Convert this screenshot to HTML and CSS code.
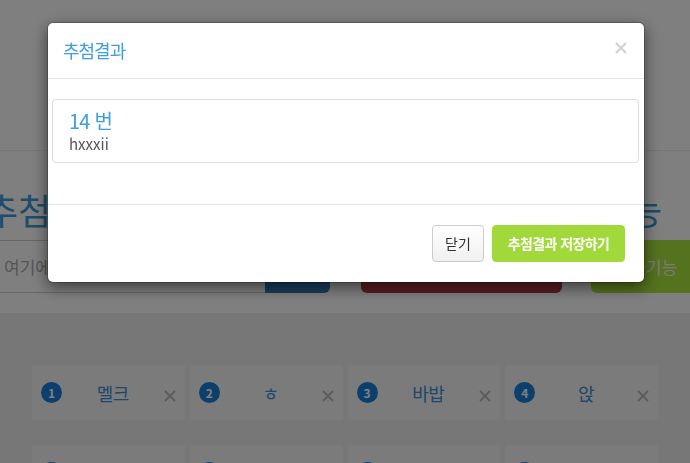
FILE: index.html
```html
<!DOCTYPE html>
<html lang="ko">
<head>
<meta charset="utf-8">
<title>추첨결과</title>
<link rel="stylesheet" href="styles.css">
</head>
<body>
<div class="page">
  <header class="top"></header>
  <section class="controls">
    <div class="title-row">
      <h1 class="title">추첨 프로그램</h1>
      <span class="title-right">추가 기능</span>
    </div>
    <div class="input-row">
      <div class="input-group">
        <input class="name-input" type="text" placeholder="여기에 이름을 입력하세요">
        <button class="btn-add">추가</button>
      </div>
      <button class="btn-red">추첨하기</button>
      <button class="btn-green">추가기능</button>
    </div>
  </section>
  <section class="list">
    <div class="cards">
      <div class="card"><span class="badge">1</span><span class="name">멜크</span><span class="remove"><svg viewBox="0 0 12 12" width="12" height="12"><path d="M1 1L11 11M11 1L1 11"/></svg></span></div>
      <div class="card"><span class="badge">2</span><span class="name">ㅎ</span><span class="remove"><svg viewBox="0 0 12 12" width="12" height="12"><path d="M1 1L11 11M11 1L1 11"/></svg></span></div>
      <div class="card"><span class="badge">3</span><span class="name">바밥</span><span class="remove"><svg viewBox="0 0 12 12" width="12" height="12"><path d="M1 1L11 11M11 1L1 11"/></svg></span></div>
      <div class="card"><span class="badge">4</span><span class="name">앉</span><span class="remove"><svg viewBox="0 0 12 12" width="12" height="12"><path d="M1 1L11 11M11 1L1 11"/></svg></span></div>
      <div class="card"><span class="badge">5</span><span class="name">가나</span><span class="remove"><svg viewBox="0 0 12 12" width="12" height="12"><path d="M1 1L11 11M11 1L1 11"/></svg></span></div>
      <div class="card"><span class="badge">6</span><span class="name">다라</span><span class="remove"><svg viewBox="0 0 12 12" width="12" height="12"><path d="M1 1L11 11M11 1L1 11"/></svg></span></div>
      <div class="card"><span class="badge">7</span><span class="name">마바</span><span class="remove"><svg viewBox="0 0 12 12" width="12" height="12"><path d="M1 1L11 11M11 1L1 11"/></svg></span></div>
      <div class="card"><span class="badge">8</span><span class="name">사아</span><span class="remove"><svg viewBox="0 0 12 12" width="12" height="12"><path d="M1 1L11 11M11 1L1 11"/></svg></span></div>
    </div>
  </section>
</div>

<div class="backdrop"></div>

<div class="modal">
  <div class="modal-header">
    <h4 class="modal-title">추첨결과</h4>
    <button class="close" aria-label="닫기"><svg viewBox="0 0 12 12" width="12" height="12"><path d="M1 1L11 11M11 1L1 11"/></svg></button>
  </div>
  <div class="modal-body">
    <div class="result">
      <h4 class="result-num">14 번</h4>
      <p class="result-name">hxxxii</p>
    </div>
  </div>
  <div class="modal-footer">
    <button class="btn btn-default">닫기</button>
    <button class="btn btn-save">추첨결과 저장하기</button>
  </div>
</div>
</body>
</html>
```
FILE: styles.css
```css
* { box-sizing: border-box; }
html, body { margin: 0; padding: 0; }
body {
  width: 690px;
  height: 463px;
  overflow: hidden;
  background: #fff;
  font-family: "Noto Sans CJK KR", "Noto Sans", sans-serif;
  color: #333;
}
.page { width: 690px; height: 463px; overflow: hidden; }

.top {
  height: 151px;
  border-bottom: 1px solid #eee;
}

.controls {
  margin-left: -15px;
  width: 677px;
  padding-top: 36px;
}
.title-row {
  display: flex;
  justify-content: space-between;
  align-items: center;
  height: 44px;
}
.title, .title-right {
  margin: 0;
  font-size: 36px;
  font-weight: 400;
  line-height: 44px;
  color: #3a9ad9;
  white-space: nowrap;
}
.input-row {
  display: flex;
  margin-top: 9px;
  height: 53px;
  white-space: nowrap;
}
.input-group { display: flex; flex-shrink: 0; }
.name-input {
  width: 280px;
  height: 53px;
  border: 1px solid #ccc;
  border-right: 0;
  padding: 0 0 0 18px;
  font-family: inherit;
  font-size: 17px;
  color: #333;
  background: #fff;
}
.name-input::placeholder { color: #aaa; }
.btn-add, .btn-red, .btn-green {
  flex-shrink: 0;
  border: 0;
  height: 53px;
  font-family: inherit;
  font-size: 17px;
  color: #fff;
}
.btn-add {
  width: 65px;
  background: #337ab7;
  border-radius: 0 6px 6px 0;
}
.btn-red {
  width: 201px;
  margin-left: 31px;
  background: #b43c44;
  border-radius: 6px;
}
.btn-green {
  width: 110px;
  margin-left: 29px;
  background: #aae43e;
  border-radius: 6px;
  color: #f4f4f4;
}

.list {
  margin-top: 20px;
  background: #eee;
  padding-top: 51px;
  height: 160px;
}
.cards {
  width: 628px;
  margin: 0 auto;
  display: grid;
  grid-template-columns: repeat(4, 1fr);
  column-gap: 3px;
  row-gap: 23px;
}
.card {
  height: 57px;
  background: #f7f7f7;
  border: 1px solid #f0f0f0;
  border-radius: 3px;
  display: flex;
  align-items: center;
  padding: 0 9px 0 9px;
}
.badge {
  width: 21px;
  height: 21px;
  border-radius: 50%;
  background: #1a7fd9;
  color: #fff;
  font-size: 12px;
  font-weight: 700;
  line-height: 21px;
  text-align: center;
  flex-shrink: 0;
}
.name {
  flex: 1;
  text-align: center;
  font-size: 18px;
  letter-spacing: -0.5px;
  color: #3d8fd6;
}
.remove {
  width: 12px;
  height: 12px;
  margin-top: 6px;
  display: flex;
}
.remove svg path {
  stroke: #b8b8b8;
  stroke-width: 1.8;
  fill: none;
}

.backdrop {
  position: fixed;
  inset: 0;
  background: rgba(0, 0, 0, 0.5);
}

.modal {
  position: fixed;
  top: 22px;
  left: 47px;
  width: 598px;
  background: #fff;
  border: 1px solid rgba(0, 0, 0, 0.2);
  border-radius: 6px;
  box-shadow: 0 5px 15px rgba(0, 0, 0, 0.5);
  background-clip: padding-box;
}
.modal-header {
  position: relative;
  padding: 15px;
  border-bottom: 1px solid #e5e5e5;
}
.modal-title {
  margin: 0;
  font-size: 18px;
  font-weight: 400;
  line-height: 25px;
  letter-spacing: -1px;
  color: #3d9ee0;
}
.close {
  position: absolute;
  top: 19px;
  right: 17px;
  width: 12px;
  height: 12px;
  padding: 0;
  border: 0;
  background: none;
  display: flex;
}
.close svg path {
  stroke: #cfcfcf;
  stroke-width: 1.8;
  fill: none;
}
.modal-body {
  padding: 20px 5px 21px 4px;
}
.result {
  border: 1px solid #ddd;
  border-radius: 4px;
  padding: 7px 16px 8px;
  margin-bottom: 20px;
  height: 64px;
}
.result-num {
  margin: 0;
  font-size: 20px;
  font-weight: 400;
  line-height: 27px;
  letter-spacing: -0.8px;
  color: #3d9ee0;
}
.result-name {
  margin: 0;
  font-size: 15px;
  line-height: 20px;
  color: #555;
}
.modal-footer {
  border-top: 1px solid #e5e5e5;
  padding: 20px 19px 20px 20px;
  display: flex;
  justify-content: flex-end;
  gap: 8px;
}
.btn {
  height: 37px;
  padding: 0 10px;
  font-family: inherit;
  font-size: 14px;
  line-height: 35px;
  border-radius: 4px;
  white-space: nowrap;
}
.btn-default {
  width: 52px;
  color: #333;
  background: linear-gradient(#fff, #f0f0f0);
  border: 1px solid #ccc;
}
.btn-save {
  width: 133px;
  color: #fff;
  font-weight: 700;
  letter-spacing: -0.6px;
  background: #a2d93a;
  border: 1px solid #a2d93a;
}
```
